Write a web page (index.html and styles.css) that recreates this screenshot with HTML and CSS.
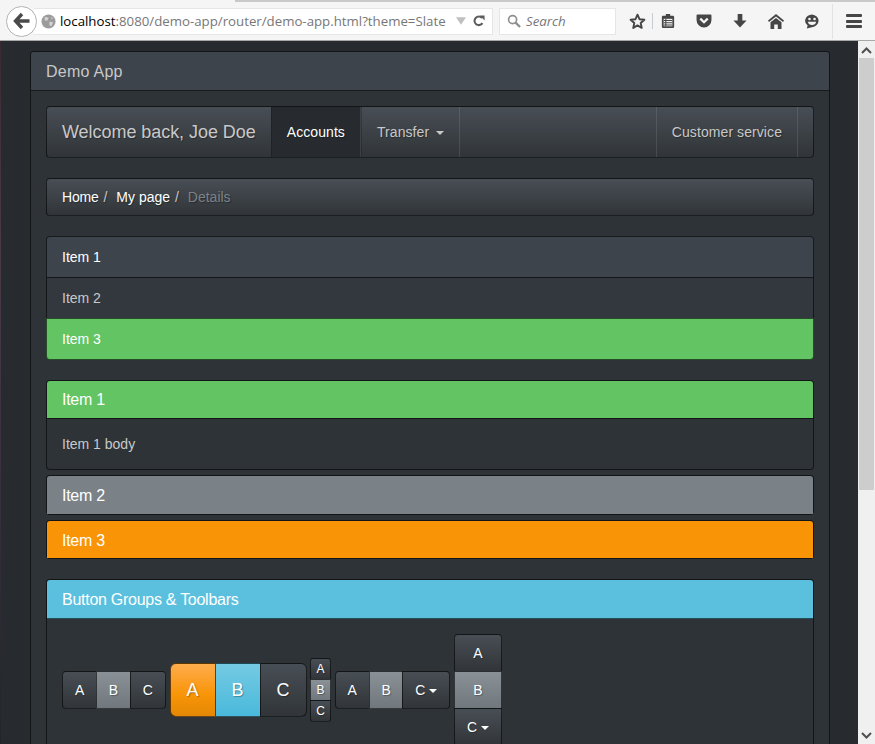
FILE: index.html
```html
<!DOCTYPE html>
<html lang="en">
<head>
    <meta charset="UTF-8">
    <meta name="viewport" content="width=device-width, initial-scale=1.0">
    <title>Demo App</title>
    <link rel="stylesheet" href="styles.css">
</head>
<body>
    <div class="tabstrip"><div class="tabstrip-tab"></div></div>

    <!-- browser toolbar -->
    <header class="toolbar">
        <div class="back">
            <svg width="20" height="20" viewBox="0 0 20 20"><path d="M10 3 L3.5 10 L10 17 M4 10 H17.5" fill="none" stroke="#4a4a4a" stroke-width="3.4"/></svg>
        </div>
        <div class="urlbar">
            <svg class="globe" width="15" height="15" viewBox="0 0 16 16"><circle cx="8" cy="8" r="7.5" fill="#9b9b9b"/><path d="M4 3 L8 4 L7 7 L4 7 Z M9 8 L13 9 L11 13 L9 12 Z M11 3 L13 5 L11 5 Z" fill="#d4d4d4"/></svg>
            <span class="url"><b>localhost</b>:8080/demo-app/router/demo-app.html?theme=Slate</span>
            <svg class="url-drop" width="10" height="8" viewBox="0 0 11 8"><path d="M0 0 H11 L5.5 8 Z" fill="#c0c0c0"/></svg>
            <svg class="reload" width="12" height="12" viewBox="0 0 14 14"><path d="M11 9.5 A5 5 0 1 1 10.5 3.5" fill="none" stroke="#5c5c5c" stroke-width="2.4"/><path d="M8 0.5 L13.5 0.5 L13.5 6.5 Z" fill="#5c5c5c"/></svg>
        </div>
        <div class="searchbar">
            <svg width="14" height="14" viewBox="0 0 15 15"><circle cx="6" cy="6" r="4.3" fill="none" stroke="#8e8e8e" stroke-width="1.8"/><path d="M9.2 9.2 L14 14" stroke="#8e8e8e" stroke-width="2.4"/></svg>
            <span>Search</span>
        </div>
        <div class="tools">
            <svg width="17" height="17" viewBox="0 0 18 18"><path d="M9 1.8 L11.1 6.6 L16.3 7.1 L12.4 10.6 L13.5 15.8 L9 13.1 L4.5 15.8 L5.6 10.6 L1.7 7.1 L6.9 6.6 Z" fill="none" stroke="#464646" stroke-width="2" stroke-linejoin="round"/></svg>
            <i class="tool-sep"></i>
            <svg width="14" height="16" viewBox="0 0 16 18"><path d="M5.5 3 V1 H10.5 V3 H14 A1.5 1.5 0 0 1 15 4.5 V15.5 A1.5 1.5 0 0 1 14 17 H2 A1.5 1.5 0 0 1 1 15.5 V4.5 A1.5 1.5 0 0 1 2 3 Z" fill="#464646"/><path d="M3 6.5 H13 V15 H3 Z" fill="#f5f5f5"/><path d="M3 8.5 H13 M3 11 H13 M3 13.5 H13 M5.5 6.5 V15" stroke="#464646" stroke-width="1.2"/></svg>
            <svg class="tool-pocket" width="16" height="14" viewBox="0 0 17 15"><path d="M1.5 0.5 H15.5 A1 1 0 0 1 16.5 1.5 V6.5 A8 8 0 0 1 0.5 6.5 V1.5 A1 1 0 0 1 1.5 0.5 Z" fill="#464646"/><path d="M4.5 5 L8.5 8.8 L12.5 5" fill="none" stroke="#f5f5f5" stroke-width="2.4"/></svg>
            <svg class="tool-down" width="14" height="14" viewBox="0 0 15 15"><path d="M5 0 H10 V7 H14.5 L7.5 14.5 L0.5 7 H5 Z" fill="#464646"/></svg>
            <svg class="tool-home" width="16" height="15" viewBox="0 0 16 15"><path d="M8 0 L16 6.5 L15 8 L8 2.6 L1 8 L0 6.5 Z" fill="#464646"/><path d="M8 4 L13.5 8.2 V15 H9.8 V10.5 H6.2 V15 H2.5 V8.2 Z" fill="#464646"/></svg>
            <svg class="tool-smile" width="16" height="15" viewBox="0 0 17 16"><path d="M8.5 0.5 A8 6.8 0 0 1 8.5 14 L3 15.5 L3.8 12.3 A8 6.8 0 0 1 8.5 0.5 Z" fill="#464646"/><circle cx="5.8" cy="5.3" r="1.4" fill="#f5f5f5"/><circle cx="11.2" cy="5.3" r="1.4" fill="#f5f5f5"/><path d="M4 8.2 H13 Q12 11.6 8.5 11.6 Q5 11.6 4 8.2 Z" fill="#f5f5f5"/></svg>
            <i class="tool-divider"></i>
            <div class="tool-menu"><i></i><i></i><i></i></div>
        </div>
    </header>

    <div class="viewport">
        <div class="edge"></div>
        <main class="content">
            <section class="panel">
                <div class="panel-heading main-heading">Demo App</div>
                <div class="panel-body">
                    <nav class="navbar">
                        <a class="brand">Welcome back, Joe Doe</a>
                        <ul class="nav">
                            <li class="active"><a>Accounts</a></li>
                            <li><a>Transfer <span class="caret"></span></a></li>
                        </ul>
                        <ul class="nav nav-right">
                            <li><a>Customer service</a></li>
                        </ul>
                    </nav>

                    <ol class="breadcrumb">
                        <li><a>Home</a></li>
                        <li><a>My page</a></li>
                        <li class="current">Details</li>
                    </ol>

                    <div class="list-group">
                        <div class="list-item active">Item 1</div>
                        <div class="list-item">Item 2</div>
                        <div class="list-item success">Item 3</div>
                    </div>

                    <div class="accordion">
                        <div class="panel">
                            <div class="panel-heading success">Item 1</div>
                            <div class="panel-text">Item 1 body</div>
                        </div>
                        <div class="panel">
                            <div class="panel-heading grey">Item 2</div>
                        </div>
                        <div class="panel">
                            <div class="panel-heading warning">Item 3</div>
                        </div>
                    </div>

                    <div class="panel">
                        <div class="panel-heading info">Button Groups &amp; Toolbars</div>
                        <div class="panel-body button-row">
                            <div class="btn-group">
                                <button class="btn">A</button>
                                <button class="btn btn-on">B</button>
                                <button class="btn">C</button>
                            </div>
                            <div class="btn-group btn-group-lg">
                                <button class="btn btn-warning">A</button>
                                <button class="btn btn-info">B</button>
                                <button class="btn">C</button>
                            </div>
                            <div class="btn-group-vertical btn-group-xs">
                                <button class="btn">A</button>
                                <button class="btn btn-on">B</button>
                                <button class="btn">C</button>
                            </div>
                            <div class="btn-group">
                                <button class="btn">A</button>
                                <button class="btn btn-on">B</button>
                                <button class="btn">C <span class="caret"></span></button>
                            </div>
                            <div class="btn-group-vertical">
                                <button class="btn">A</button>
                                <button class="btn btn-on">B</button>
                                <button class="btn">C <span class="caret"></span></button>
                            </div>
                        </div>
                    </div>
                </div>
            </section>
        </main>
        <aside class="scrollbar">
            <svg class="scroll-arrow" width="11" height="7" viewBox="0 0 11 7"><path d="M1 6 L5.5 1.5 L10 6" fill="none" stroke="#505050" stroke-width="2"/></svg>
            <div class="scroll-thumb"></div>
            <svg class="scroll-arrow scroll-arrow-down" width="11" height="7" viewBox="0 0 11 7"><path d="M1 1 L5.5 5.5 L10 1" fill="none" stroke="#505050" stroke-width="2"/></svg>
        </aside>
    </div>
</body>
</html>
```

FILE: styles.css
```css
* {
    box-sizing: border-box;
}
html, body {
    margin: 0;
    height: 744px;
    overflow: hidden;
}
body {
    display: flex;
    flex-direction: column;
    font-family: "Liberation Sans", Arial, sans-serif;
    font-size: 14px;
    line-height: 20px;
    color: #c8c8c8;
    background-color: #272b30;
}

/* browser chrome */
.tabstrip {
    height: 2px;
    flex: none;
    background-color: #c9c9c9;
}
.tabstrip-tab {
    width: 235px;
    height: 2px;
    background-color: #f5f5f5;
}
.toolbar {
    height: 39px;
    flex: none;
    display: flex;
    align-items: center;
    padding-left: 6px;
    background-color: #f5f5f5;
    border-bottom: 1px solid #a8a8a8;
}
.back {
    width: 31px;
    height: 31px;
    margin-right: -3px;
    display: flex;
    align-items: center;
    justify-content: center;
    position: relative;
    background-color: #fff;
    border: 1px solid #b4b4b4;
    border-radius: 50%;
}
.urlbar {
    width: 459px;
    height: 27px;
    display: flex;
    align-items: center;
    padding: 0 7px 0 7px;
    background-color: #fff;
    border: 1px solid #e6e6e6;
    border-left: none;
}
.url {
    flex: 1;
    margin-left: 4px;
    font-family: "Open Sans", sans-serif;
    font-size: 13.25px;
    color: #777;
    white-space: nowrap;
    overflow: hidden;
}
.url b {
    font-weight: 400;
    color: #000;
}
.url-drop {
    margin: 0 7px 0 5px;
}
.searchbar {
    width: 117px;
    height: 27px;
    margin-left: 6px;
    display: flex;
    align-items: center;
    gap: 5px;
    padding-left: 7px;
    font-family: "Open Sans", sans-serif;
    font-size: 13.25px;
    font-style: italic;
    color: #777;
    background-color: #fff;
    border: 1px solid #e6e6e6;
}
.tools {
    flex: 1;
    display: flex;
    align-items: center;
    padding-left: 13px;
}
.tool-sep {
    width: 1px;
    height: 16px;
    margin: 0 8px 0 6px;
    background-color: #c4ccd4;
}
.tool-pocket {
    margin-left: 21px;
}
.tool-down {
    margin-left: 21px;
}
.tool-home {
    margin-left: 21px;
}
.tool-smile {
    margin-left: 20px;
}
.tool-divider {
    width: 1px;
    height: 35px;
    margin: 0 13px 0 12px;
    background-color: #e2e2e2;
}
.tool-menu i {
    display: block;
    width: 16px;
    height: 3px;
    margin: 2.5px 0;
    border-radius: 1px;
    background-color: #464646;
}

.viewport {
    flex: 1;
    min-height: 0;
    display: flex;
}
.edge {
    width: 1px;
    flex: none;
    background: linear-gradient(#3a2a30, #4a3a48 30%, #3a3040 60%, #22262b);
}
.content {
    width: 857px;
    flex: none;
    padding: 10px 0 0 29px;
}
.scrollbar {
    flex: 1;
    display: flex;
    flex-direction: column;
    align-items: center;
    padding-top: 6px;
    background-color: #f0f0f0;
}
.scroll-arrow {
    flex: none;
}
.scroll-thumb {
    width: 15px;
    height: 432px;
    margin-top: 4px;
    background-color: #cdcdcd;
}
.scroll-arrow-down {
    margin-top: 242px;
}

/* page */
.panel {
    width: 100%;
    margin-bottom: 20px;
    background-color: #2e3338;
    border: 1px solid rgba(0, 0, 0, 0.6);
    border-radius: 4px;
}
.content > .panel {
    width: 800px;
}
.panel-heading {
    padding: 10px 15px;
    font-size: 16px;
    line-height: 17.6px;
    letter-spacing: -0.27px;
    color: #fff;
    border-radius: 3px 3px 0 0;
}
.main-heading {
    padding: 11px 15px 9px;
    letter-spacing: 0.25px;
    color: #c8c8c8;
    background-color: #3e444c;
    border-bottom: 1px solid rgba(0, 0, 0, 0.6);
}
.panel-body {
    padding: 15px;
}
.panel-text {
    padding: 15px;
    border-top: 1px solid rgba(0, 0, 0, 0.6);
}
.success {
    color: #fff;
    background-color: #62c462;
}
.grey {
    padding: 11px 15px 9px;
    background-color: #7a8288;
}
.warning {
    padding: 11px 15px 9px;
    background-color: #f89406;
}
.info {
    padding: 11px 15px 9px;
    background-color: #5bc0de;
    border-bottom: 1px solid rgba(0, 0, 0, 0.6);
}

.navbar {
    height: 52px;
    margin-bottom: 20px;
    display: flex;
    text-shadow: 1px 1px 1px rgba(0, 0, 0, 0.3);
    background-image: linear-gradient(#484e55, #3a3f44 60%, #313539);
    border: 1px solid rgba(0, 0, 0, 0.6);
    border-radius: 4px;
}
.brand {
    padding: 15px;
    font-size: 18px;
    letter-spacing: -0.05px;
    color: #c8c8c8;
}
.nav {
    margin: 0;
    padding: 0;
    display: flex;
    list-style: none;
    letter-spacing: 0.08px;
}
.nav li {
    padding: 15px;
    border-left: 1px solid rgba(0, 0, 0, 0.2);
    border-right: 1px solid rgba(255, 255, 255, 0.1);
}
.nav .active {
    color: #fff;
    background-color: #272b30;
}
.nav-right {
    margin-left: auto;
    margin-right: 15px;
}
.nav-right li {
    border-left-color: rgba(255, 255, 255, 0.1);
}
.caret {
    display: inline-block;
    margin-left: 3px;
    vertical-align: middle;
    border-top: 4px solid currentColor;
    border-left: 4px solid transparent;
    border-right: 4px solid transparent;
}

.breadcrumb {
    height: 38px;
    margin: 0 0 20px;
    padding: 8px 15px;
    display: flex;
    list-style: none;
    color: #7a8288;
    text-shadow: 1px 1px 1px rgba(0, 0, 0, 0.3);
    background-image: linear-gradient(#484e55, #3a3f44 60%, #313539);
    border: 1px solid rgba(0, 0, 0, 0.6);
    border-radius: 4px;
}
.breadcrumb a {
    color: #fff;
}
.breadcrumb li:first-child a {
    letter-spacing: -0.2px;
}
.breadcrumb li + li:before {
    content: "/\00a0";
    padding: 0 5px;
    color: #c8c8c8;
}
.breadcrumb .current {
    color: #7a8288;
}

.list-group {
    margin-bottom: 20px;
}
.list-item {
    padding: 10px 15px;
    margin-bottom: -1px;
    background-color: #32383e;
    border: 1px solid rgba(0, 0, 0, 0.6);
}
.list-item:first-child {
    border-radius: 4px 4px 0 0;
}
.list-item:last-child {
    margin-bottom: 0;
    border-radius: 0 0 4px 4px;
}
.list-item.active {
    color: #fff;
    background-color: #3e444c;
}
.list-item.success {
    color: #fff;
    background-color: #62c462;
}

.accordion {
    margin-bottom: 20px;
}
.accordion .panel {
    margin-bottom: 0;
}
.accordion .panel + .panel {
    margin-top: 5px;
}

.button-row {
    display: flex;
    align-items: center;
    gap: 3.7px;
}
.btn-group {
    display: flex;
}
.btn-group-vertical {
    display: flex;
    flex-direction: column;
}
.btn {
    padding: 8px 12px;
    font-family: "Liberation Sans", Arial, sans-serif;
    font-size: 14px;
    line-height: 20px;
    color: #fff;
    text-shadow: 1px 1px 1px rgba(0, 0, 0, 0.3);
    background-image: linear-gradient(#484e55, #3a3f44 60%, #313539);
    border: 1px solid rgba(0, 0, 0, 0.6);
}
.btn .caret {
    margin-left: 0;
}
.btn-on {
    padding: 8px 11.5px;
    background-image: linear-gradient(#8a9196, #7a8288 60%, #70787d);
}
.btn-warning {
    background-image: linear-gradient(#ffac4d, #f89406 60%, #e48806);
}
.btn-info {
    background-image: linear-gradient(#74cae3, #5bc0de 60%, #4ab9db);
}
.btn-group .btn + .btn {
    margin-left: -1px;
}
.btn-group .btn:first-child {
    border-radius: 4px 0 0 4px;
}
.btn-group .btn:last-child {
    border-radius: 0 4px 4px 0;
}
.btn-group-vertical .btn + .btn {
    margin-top: -1px;
}
.btn-group-vertical .btn {
    border-radius: 0;
}
.btn-group-vertical .btn:first-child {
    border-radius: 4px 4px 0 0;
}
.btn-group-vertical .btn:last-child {
    border-radius: 0 0 4px 4px;
}
.btn-group-lg .btn {
    padding: 14px 16px;
    font-size: 18px;
    line-height: 24px;
}
.btn-group-lg .btn:first-child {
    border-radius: 6px 0 0 6px;
}
.btn-group-lg .btn:last-child {
    border-radius: 0 6px 6px 0;
}
.btn-group-xs .btn {
    padding: 1px 5px;
    font-size: 12px;
    line-height: 18px;
}
.btn-group-xs .btn:first-child {
    border-radius: 3px 3px 0 0;
}
.btn-group-xs .btn:last-child {
    border-radius: 0 0 3px 3px;
}
```
